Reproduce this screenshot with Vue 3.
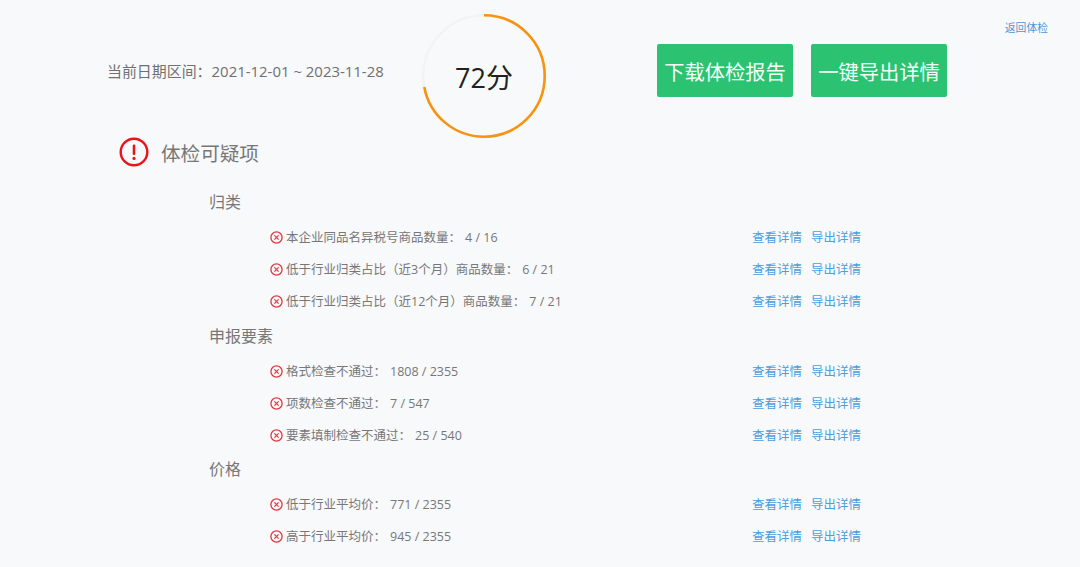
<script setup>
const groups = [
  { title: '归类', items: [
    { label: '本企业同品名异税号商品数量', value: '4 / 16' },
    { label: '低于行业归类占比（近3个月）商品数量', value: '6 / 21' },
    { label: '低于行业归类占比（近12个月）商品数量', value: '7 / 21' },
  ] },
  { title: '申报要素', items: [
    { label: '格式检查不通过', value: '1808 / 2355' },
    { label: '项数检查不通过', value: '7 / 547' },
    { label: '要素填制检查不通过', value: '25 / 540' },
  ] },
  { title: '价格', items: [
    { label: '低于行业平均价', value: '771 / 2355' },
    { label: '高于行业平均价', value: '945 / 2355' },
  ] },
]
const score = 72
const radius = 60.7
const circumference = 2 * Math.PI * radius
const dash = `${(circumference * score) / 100} ${circumference}`
</script>

<template>
  <main class="page">
    <header class="head">
      <div class="range">当前日期区间：<span>2021-12-01 ~ 2023-11-28</span></div>
      <div class="ring">
        <svg width="126" height="126" viewBox="0 0 126 126">
          <circle cx="63" cy="63" :r="radius" fill="none" stroke="#f3f3f3" stroke-width="2.6" />
          <circle cx="63" cy="63" :r="radius" fill="none" stroke="#f7930f" stroke-width="2.6"
            :stroke-dasharray="dash" transform="rotate(-90 63 63)" />
        </svg>
        <div class="score">{{ score }}分</div>
      </div>
      <div class="actions">
        <button class="btn">下载体检报告</button>
        <button class="btn">一键导出详情</button>
      </div>
      <a class="back">返回体检</a>
    </header>

    <section class="suspect">
      <div class="suspect-title">
        <svg class="warn" width="30" height="30" viewBox="0 0 30 30">
          <circle cx="15" cy="15" r="13.3" fill="none" stroke="#e9141a" stroke-width="2.4" />
          <rect x="13.7" y="7.5" width="2.6" height="10.5" rx="1.2" fill="#e9141a" />
          <circle cx="15" cy="21.4" r="1.6" fill="#e9141a" />
        </svg>
        <h2>体检可疑项</h2>
      </div>

      <div v-for="group in groups" :key="group.title" class="group">
        <h3>{{ group.title }}</h3>
        <div v-for="item in group.items" :key="item.label" class="row">
          <div class="label">
            <svg class="err" width="13" height="13" viewBox="0 0 13 13">
              <circle cx="6.5" cy="6.5" r="5.6" fill="none" stroke="#e2353c" stroke-width="1.3" />
              <path d="M4.4 4.4l4.2 4.2M8.6 4.4l-4.2 4.2" stroke="#e2353c" stroke-width="1.2" fill="none" />
            </svg>
            <span class="text">{{ item.label }}：<i class="val">{{ item.value }}</i></span>
          </div>
          <div class="links">
            <a>查看详情</a>
            <a>导出详情</a>
          </div>
        </div>
      </div>
    </section>
  </main>
</template>

<style scoped>
.page {
  width: 1080px;
  height: 567px;
  overflow: hidden;
  box-sizing: border-box;
  background: #f8f9fb;
  font-family: "Open Sans", "Noto Sans CJK SC", sans-serif;
  color: #777;
}
.head {
  display: flex;
  align-items: flex-start;
  height: 137px;
  box-sizing: border-box;
  padding: 13px 32px 0 107px;
}
.range {
  width: 314px;
  flex: none;
  margin-top: 47px;
  font-size: 14.95px;
  line-height: 22px;
  color: #707070;
  white-space: nowrap;
}
.ring {
  position: relative;
  width: 126px;
  height: 126px;
  flex: none;
}
.ring svg { display: block; }
.score {
  position: absolute;
  inset: 0;
  display: flex;
  align-items: center;
  justify-content: center;
  font-size: 27px;
  color: #222;
}
.actions {
  display: flex;
  gap: 18px;
  margin: 31px 0 0 110px;
}
.btn {
  width: 136px;
  height: 53px;
  padding: 0;
  border: 0;
  border-radius: 2px;
  background: #2bc371;
  color: #f4fff8;
  font: inherit;
  font-size: 20.3px;
  white-space: nowrap;
}
.back {
  margin-left: auto;
  margin-top: 6px;
  font-size: 10.8px;
  line-height: 18px;
  color: #4a97d8;
}
.suspect { padding-left: 119px; }
.suspect-title {
  display: flex;
  align-items: center;
  gap: 12px;
  height: 30px;
  margin-bottom: 17px;
}
.warn { flex: none; }
h2 {
  margin: 0;
  font-size: 19.6px;
  font-weight: 400;
  color: #777;
}
.group { padding-left: 90px; }
h3 {
  margin: 0;
  height: 37.5px;
  line-height: 37px;
  font-size: 16px;
  font-weight: 400;
  color: #777;
}
.row {
  display: grid;
  grid-template-columns: 482px auto;
  justify-content: start;
  align-items: center;
  height: 32px;
  padding-left: 61px;
  font-size: 12.5px;
}
.label {
  display: flex;
  align-items: center;
  gap: 3px;
  white-space: nowrap;
}
.err { flex: none; }
.text { padding-bottom: 2px; }
.val { font-style: normal; margin-left: 4px; }
.links {
  display: flex;
  gap: 9px;
  padding-bottom: 2px;
  color: #4a9fe0;
  white-space: nowrap;
}
</style>
